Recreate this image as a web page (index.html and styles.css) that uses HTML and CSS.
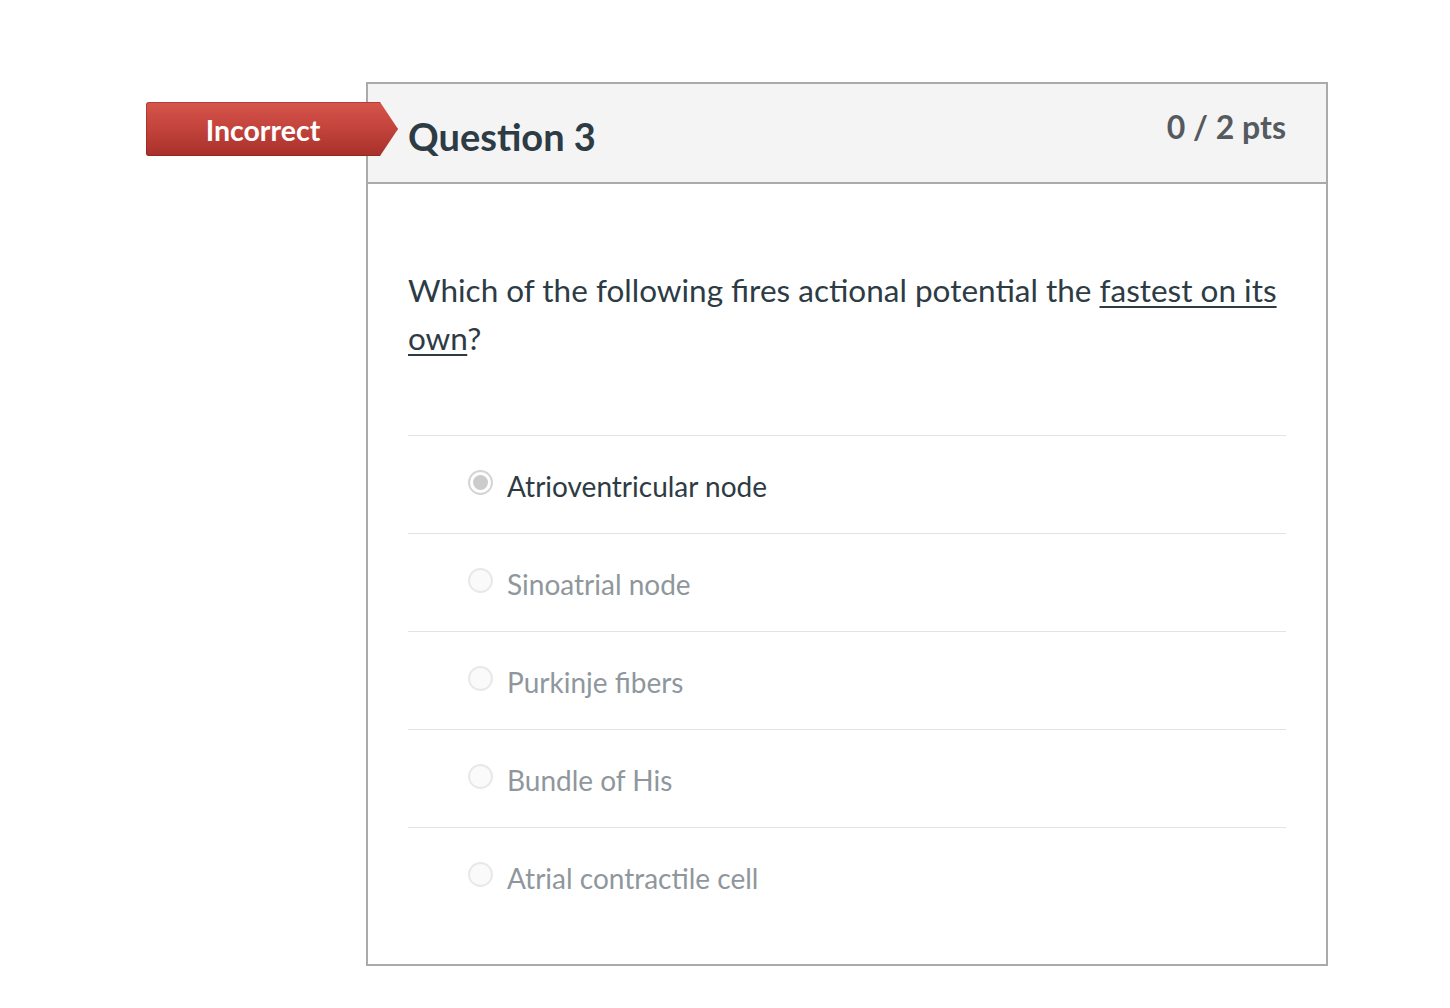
FILE: index.html
```html
<!DOCTYPE html>
<html lang="en">
<head>
<meta charset="utf-8">
<title>Question 3</title>
<link rel="stylesheet" href="styles.css">
</head>
<body>
<div class="page">
  <div class="card">
    <div class="badge"><span>Incorrect</span></div>
    <div class="card-header">
      <h2 class="title">Question 3</h2>
      <div class="pts">0 / 2 pts</div>
    </div>
    <div class="card-body">
      <p class="question">Which of the following fires actional potential the <u>fastest on its own</u>?</p>
      <div class="answers">
        <div class="answer selected"><span class="radio"></span><span class="label">Atrioventricular node</span></div>
        <div class="answer"><span class="radio"></span><span class="label">Sinoatrial node</span></div>
        <div class="answer"><span class="radio"></span><span class="label">Purkinje fibers</span></div>
        <div class="answer"><span class="radio"></span><span class="label">Bundle of His</span></div>
        <div class="answer"><span class="radio"></span><span class="label">Atrial contractile cell</span></div>
      </div>
    </div>
  </div>
</div>
</body>
</html>
```

FILE: styles.css
```css
* { box-sizing: border-box; }
html, body { margin: 0; padding: 0; background: #fff; }
body {
  font-family: Lato, "Open Sans", "Liberation Sans", sans-serif;
  color: #2d3b45;
}
.page {
  padding: 82px 0 0 366px;
}
.card {
  position: relative;
  width: 962px;
  border: 2px solid #aaaaaa;
  background: #fff;
}
.badge {
  position: absolute;
  left: -222px;
  top: 18px;
  width: 252px;
  height: 54px;
  border-radius: 3px 0 0 3px;
  background: linear-gradient(#d6554c, #c2433b 50%, #a8302a);
  clip-path: polygon(0 0, 234px 0, 100% 50%, 234px 100%, 0 100%);
  box-shadow: inset 0 0 0 1px rgba(120, 20, 15, 0.35);
  display: flex;
  align-items: center;
  padding-right: 18px;
  justify-content: center;
  z-index: 2;
}
.badge span {
  color: #fff;
  font-weight: 700;
  font-size: 28.5px;
  line-height: 32px;
  margin-top: 1px;
}
.card-header {
  height: 100px;
  background: #f4f4f4;
  border-bottom: 2px solid #aaaaaa;
  padding: 0 40px;
  display: flex;
  justify-content: space-between;
  align-items: flex-start;
}
.title {
  margin: 29px 0 0;
  font-size: 38px;
  line-height: 46px;
  font-weight: 700;
  color: #2d3b45;
}
.pts {
  margin-top: 23px;
  font-size: 32px;
  line-height: 39px;
  font-weight: 700;
  color: #555a5e;
}
.card-body {
  padding: 82px 40px 39px;
}
.question {
  margin: 0 0 73px;
  font-size: 31.5px;
  line-height: 48px;
}
.question u {
  text-decoration-thickness: 2px;
  text-underline-offset: 4px;
}
.answer {
  height: 98px;
  border-top: 1px solid #e3e3e3;
  display: flex;
  align-items: center;
  padding-left: 60px;
  color: #8f979d;
}
.answer.selected { color: #2d3b45; }
.radio {
  width: 25px;
  height: 25px;
  border-radius: 50%;
  border: 2px solid #e8e8e8;
  background: #fafafa;
  margin-right: 14px;
  margin-top: -5px;
  flex: none;
  display: flex;
  align-items: center;
  justify-content: center;
}
.selected .radio {
  border-color: #d4d4d4;
  background: #fff;
}
.selected .radio::after {
  content: "";
  width: 15px;
  height: 15px;
  border-radius: 50%;
  background: #cccccc;
}
.label {
  font-size: 28px;
  line-height: 34px;
  margin-top: 2px;
}
```
